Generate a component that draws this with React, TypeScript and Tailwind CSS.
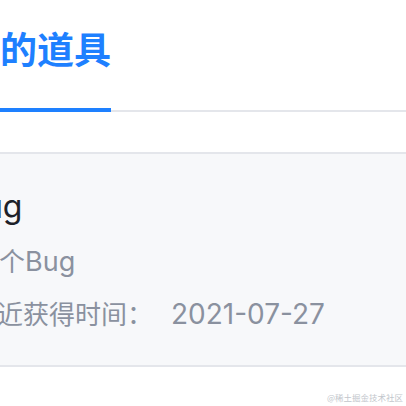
import React from "react";

export default function App() {
  return (
    <div className="relative w-[406px] h-[406px] overflow-hidden bg-white" style={{ fontFamily: 'Inter, "Noto Sans CJK SC", sans-serif' }}>
      {/* Tabs header */}
      <div className="flex border-b-2 border-[#e4e6eb] pt-[30px]">
        <div className="-ml-[37px] -mb-[2px] border-b-4 border-[#1e80ff] pb-[41px]">
          <span
            className="block text-[37px] leading-[37px] font-bold text-[#1e80ff] whitespace-nowrap"
            style={{ fontFamily: '"Noto Sans CJK SC", sans-serif' }}
          >
            我的道具
          </span>
        </div>
      </div>

      {/* Item card */}
      <div className="mt-[40px] -ml-[60px] w-[540px] rounded-[8px] border-2 border-[#e4e6eb] bg-[#f7f8fa] pl-[32px] pt-[33px] pb-[32px]">
        <div className="-ml-[11px] text-[32px] leading-[40px] text-[#1d2129] whitespace-nowrap">Bug</div>
        <div className="mt-[17px] -ml-[1px] text-[26px] leading-[36px] text-[#8a919f] whitespace-nowrap">
          一个<span className="text-[27px]">Bug</span>
        </div>
        <div className="mt-[16px] -ml-[3px] flex items-baseline text-[26px] leading-[36px] text-[#8a919f] whitespace-nowrap">
          <span>最近获得时间：</span>
          <span className="ml-[18px] text-[28px]">2021-07-27</span>
        </div>
      </div>

      {/* Watermark */}
      <div
        className="absolute right-[3px] bottom-[5px] text-[8.5px] leading-none text-[#c2c6cc] whitespace-nowrap"
        style={{ fontFamily: '"Noto Sans CJK SC", sans-serif' }}
      >
        @稀土掘金技术社区
      </div>
    </div>
  );
}
